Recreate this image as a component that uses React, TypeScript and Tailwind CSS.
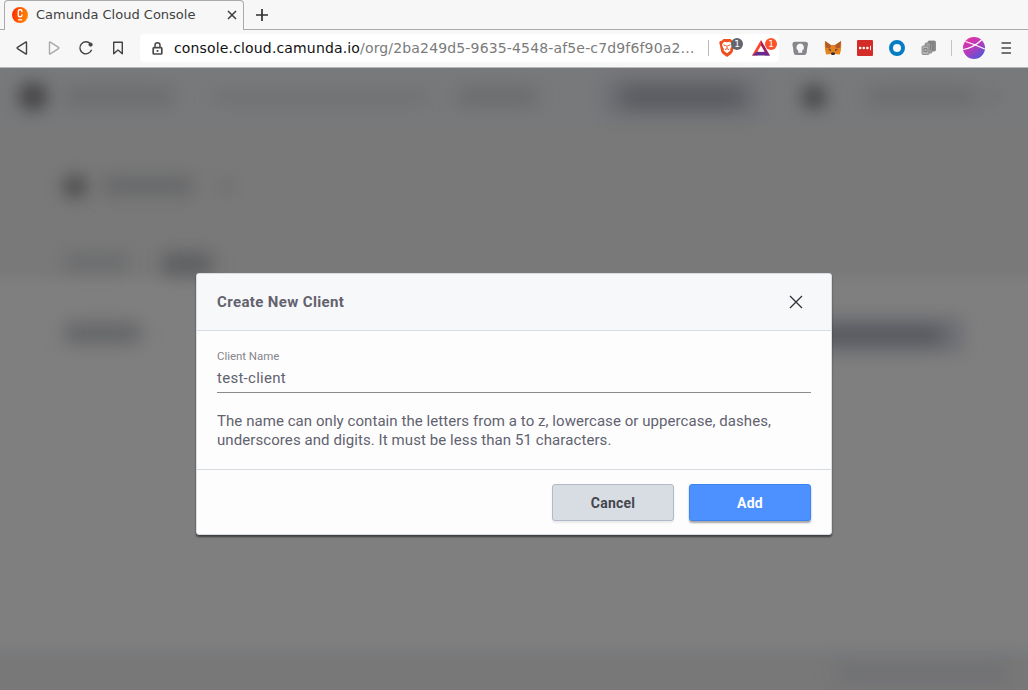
import React from "react";

function CamundaIcon() {
  return (
    <svg width="16" height="16" viewBox="0 0 16 16">
      <defs>
        <linearGradient id="cam" x1="0" x2="1" y1="0" y2="0.2">
          <stop offset="0" stopColor="#ff2500" />
          <stop offset="1" stopColor="#ff8500" />
        </linearGradient>
      </defs>
      <circle cx="8" cy="8" r="8" fill="url(#cam)" />
      <path d="M9.900 5.200V4.300q0-1.500-1.300-1.500H7.700Q6.300 2.800 6.300 4.300v4q0 1.500 1.400 1.500h.9q1.300 0 1.300-1.500V7.300" fill="none" stroke="#fff" strokeWidth="1.400" />
      <path d="M6 12.800h4.200" stroke="#fff" strokeWidth="1.200" />
    </svg>
  );
}

function TabStrip() {
  return (
    <div className="flex h-[30px] w-full shrink-0">
      <div className="w-1 border-b border-[#aaaaaa]" />
      <div className="flex w-60 items-center rounded-t-[4px] border border-b-0 border-[#aaaaaa] pb-px pl-[7px] pr-[6px]">
        <CamundaIcon />
        <span className="ml-2 whitespace-nowrap text-[13px] leading-4 text-[#3f3f3f]">Camunda Cloud Console</span>
        <svg className="ml-auto" width="11" height="10" viewBox="0 0 11 10">
          <path d="M2 1l8 8M10 1l-8 8" stroke="#3c3c3c" strokeWidth="1.500" />
        </svg>
      </div>
      <div className="flex flex-1 items-center border-b border-[#aaaaaa] pl-3">
        <svg width="12" height="12" viewBox="0 0 12 12">
          <path d="M6 0v12M0 6h12" stroke="#303030" strokeWidth="1.700" />
        </svg>
      </div>
    </div>
  );
}

function NavIcons() {
  return (
    <div className="flex w-[140px] shrink-0 items-center pl-[14px]">
      <svg width="120" height="18" viewBox="14 39 120 18" fill="none" stroke="#424242" strokeWidth="1.400" strokeLinejoin="round">
        <path d="M26.500 42.400v11.200q0 .7-.8.300l-8.200-5.300q-.8-.6 0-1.200l8.200-5.300q.8-.4.800.3z" />
        <path d="M49.500 42.400v11.200q0 .7.800.3l8.200-5.300q.8-.6 0-1.200l-8.200-5.300q-.8-.4-.8.300z" stroke="#aaaaaa" />
        <path d="M90.400 43.800A6 6 0 1 0 91.600 49.800" />
        <circle cx="90.600" cy="44.600" r="1.700" fill="#424242" strokeWidth="0.800" />
        <path d="M113.700 42.200h8.600v11.600L118 50l-4.300 3.800z" />
      </svg>
    </div>
  );
}

function LockIcon() {
  return (
    <svg className="ml-3 mr-[11px] shrink-0" width="11" height="13" viewBox="0 0 11 13">
      <path d="M3 6V3.300a2.500 2.500 0 0 1 5 0V6" fill="none" stroke="#484848" strokeWidth="1.500" />
      <rect x="1.200" y="5.700" width="8.600" height="6.300" rx="0.800" fill="none" stroke="#484848" strokeWidth="1.700" />
      <rect x="4.600" y="8" width="1.800" height="1.800" fill="#484848" />
    </svg>
  );
}

function Badge({ className }: { className: string }) {
  return (
    <span className={`absolute flex h-3 w-3 items-center justify-center rounded-full text-[9px] leading-3 text-white ${className}`}>1</span>
  );
}

function BraveIcon() {
  return (
    <svg width="16" height="18" viewBox="0 0 16 18">
      <path d="M4.500 0h7l1.700 1.700 1.900.2.7 2-.6 1.700-1.400 7.200-1.600 2.200L8 18l-4.200-3-1.600-2.200L.8 5.600.2 3.900l.7-2 1.900-.2z" fill="#f0501e" />
      <path d="M5 2.800l3 .5 3-.5 2 2.600-.7 2.600-1.200 2 .3 1.500L8 14.200l-3.400-2.700.3-1.500-1.200-2L3 5.400z" fill="#fff" />
      <path d="M4.500 5.800l2.300.9M11.500 5.800l-2.300.9M8 6v3.500M6 10.600l2-.9 2 .9" fill="none" stroke="#f0501e" strokeWidth="1" />
    </svg>
  );
}

function AddressBar() {
  return (
    <div className="flex h-7 w-[639px] shrink-0 items-center rounded-[4px] bg-white">
      <LockIcon />
      <span className="w-[522px] whitespace-nowrap text-[14px] leading-5 tracking-[0.155px] text-[#7b7b7b]">
        <span className="text-[#111]">console.cloud.camunda.io</span>/org/2ba249d5-9635-4548-af5e-c7d9f6f90a2…
      </span>
      <div className="ml-auto mr-[10px] h-4 w-px shrink-0 bg-[#b9b9b9]" />
      <div className="relative mr-[17px] h-[18px] w-4 shrink-0">
        <BraveIcon />
        <Badge className="-top-px left-[12px] bg-[#636570]" />
      </div>
      <div className="relative mr-[9px] h-4 w-[18px] shrink-0">
        <svg width="18" height="16" viewBox="0 0 18 16">
          <path d="M9 0L0 15.500h5.200L9 7z" fill="#ff4724" />
          <path d="M9 0l9 15.500h-5L9 7z" fill="#9e1f63" />
          <path d="M0 15.500L5 11.500h8l5 4z" fill="#662d91" />
          <path d="M9 5.500l3.600 6.300H5.400z" fill="#fff" />
        </svg>
        <Badge className="-top-[2px] left-[13px] bg-[#fb542b]" />
      </div>
    </div>
  );
}

function Extensions() {
  return (
    <div className="flex flex-1 items-center">
      <svg width="249" height="28" viewBox="779 34 249 28">
        <defs>
          <linearGradient id="ball" x1="0.150" y1="0" x2="0.850" y2="1">
            <stop offset="0" stopColor="#ed2fa0" />
            <stop offset="0.500" stopColor="#b23cbd" />
            <stop offset="1" stopColor="#405bdd" />
          </linearGradient>
        </defs>
        <path d="M795 41.800h10.400q2.600 0 2.600 2.600-1 3.500-1.300 8-.3 2.500-2.600 2.500h-8q-2.300 0-2.500-2.500-.3-4.500-1.200-8 0-2.600 2.600-2.600z" fill="#85878a" />
        <path d="M800.200 43.600a3.800 3.800 0 0 1 2 7v2.200h-4v-2.200a3.800 3.800 0 0 1 2-7z" fill="#f7f7f7" />
        <path d="M825 41l6 4h4l6-4 .2 5.500-.4 4-1 4-4.800-.4-1 1h-2l-1-1-4.800.4-1-4-.4-4z" fill="#e8821e" />
        <path d="M825 41l6 4.300-.9 3.200-4.300-.8zM841 41l-6 4.300.9 3.200 4.300-.8z" fill="#b25a28" />
        <path d="M828 49l3 .6-.4 1.800zM838 49l-3 .6.400 1.800z" fill="#35485c" />
        <path d="M831.500 52.500h3l.5 1.600-1 .8h-2l-1-.8z" fill="#2a2d36" />
        <rect x="857" y="40" width="16" height="16" rx="1" fill="#d42c28" />
        <circle cx="860.200" cy="48" r="1.300" fill="#fff" />
        <circle cx="863.800" cy="48" r="1.300" fill="#fff" />
        <circle cx="867.400" cy="48" r="1.300" fill="#fff" />
        <path d="M870.500 45.800v4.400" stroke="#fff" strokeWidth="0.900" />
        <circle cx="897" cy="48" r="6" fill="none" stroke="#047dc5" strokeWidth="4" />
        <g stroke="#818181" strokeWidth="0.800">
          <rect x="928" y="41" width="7.500" height="10" rx="1" fill="#8a8a8a" />
          <rect x="925" y="43" width="7" height="10" rx="1" fill="#a2a2a2" />
          <rect x="922" y="46" width="7" height="8.500" rx="1" fill="#b2b2b2" />
        </g>
        <path d="M930.500 41v9M933 41v9M924 48.500h3v3h-3z" stroke="#777" strokeWidth="0.800" fill="none" />
        <path d="M951.500 40v16" stroke="#c3c3c3" />
        <circle cx="974" cy="48" r="11" fill="url(#ball)" />
        <path d="M963.200 49.500Q973 48 981.500 40M965.500 41.500Q975 44.500 984.800 49" fill="none" stroke="#fff" strokeWidth="1.200" />
        <path d="M1001.500 43h9.500M1001.500 48h9.500M1001.500 53h9.500" stroke="#484848" strokeWidth="1.500" />
      </svg>
    </div>
  );
}

function BlurredPage() {
  return (
    <div className="flex h-full flex-col">
      <div className="h-[58px] bg-[#78797b]">
        <div className="flex h-full items-center pb-px">
          <div className="ml-[18px] h-[29px] w-[30px] rounded-full bg-[#484849] blur-[8px]" />
          <div className="ml-[18px] h-[17px] w-[107px] bg-[#6b6c6e] blur-[9px]" />
          <div className="ml-[40px] h-3 w-[215px] bg-[#707173] blur-[8px]" />
          <div className="ml-[30px] h-[17px] w-[80px] bg-[#6a6b6d] blur-[9px]" />
          <div className="ml-[67px] flex h-[36px] w-[153px] items-center justify-center bg-[#6c6d72] blur-[10px]">
            <div className="h-[22px] w-[120px] bg-[#58595e]" />
          </div>
          <div className="ml-[43px] h-[26px] w-[26px] rounded-full bg-[#4c4c4d] blur-[8px]" />
          <div className="ml-[41px] h-[17px] w-[108px] bg-[#6b6c6e] blur-[9px]" />
          <div className="ml-[12px] h-2 w-3 bg-[#707173] blur-[6px]" />
        </div>
      </div>
      <div className="h-[144px] bg-[#797979]">
        <div className="flex h-[120px] items-center pl-[62px]">
          <div className="h-[25px] w-[26px] rounded-full bg-[#535355] blur-[8px]" />
          <div className="ml-[15px] h-[18px] w-[90px] bg-[#666769] blur-[9px]" />
          <div className="ml-[29px] h-[16px] w-[10px] bg-[#6e6f71] blur-[7px]" />
        </div>
      </div>
      <div className="h-[16px] bg-linear-to-b from-[#797979] to-[#7f7f7f]">
        <div className="-mt-[22px] flex items-center pl-[65px]">
          <div className="h-4 w-[63px] bg-[#6a6b6d] blur-[9px]" />
          <div className="ml-[34px] mt-[5px] h-[22px] w-[50px] bg-[#5d5e61] blur-[9px]" />
        </div>
      </div>
      <div className="flex-1 bg-[#7f7f7f]">
        <div className="flex h-[94px] items-center pl-[65px] pr-[66px]">
          <div className="h-[20px] w-[75px] bg-[#636467] blur-[9px]" />
          <div className="ml-auto mt-1 flex h-[34px] w-[190px] items-center justify-center bg-[#6b6c72] blur-[9px]">
            <div className="h-5 w-[145px] bg-[#58595f]" />
          </div>
        </div>
      </div>
      <div className="h-[20px] bg-linear-to-b from-[#7f7f7f] to-[#78797b]" />
      <div className="flex h-[31px] items-center justify-end bg-[#787878] pb-1 pr-[20px]">
        <div className="h-4 w-[172px] bg-[#6f7073] blur-[9px]" />
      </div>
    </div>
  );
}

function ClientDialog() {
  return (
    <div className="flex h-[262px] w-[636px] flex-col overflow-hidden rounded-[3px] border border-[#d8dce3] bg-[#fdfdfe] font-[Roboto,sans-serif] text-[#62626e] shadow-[0_2px_2px_rgba(35,35,35,0.7)]">
      <div className="flex h-[57px] shrink-0 items-center justify-between border-b border-[#d8dce3] bg-[#f7f8fa] pl-5 pr-[28px]">
        <h2 className="text-[15px] font-bold leading-5 tracking-[0.370px]">Create New Client</h2>
        <svg width="14" height="14" viewBox="0 0 14 14">
          <path d="M1 1l12 12M13 1L1 13" stroke="#303036" strokeWidth="1.300" />
        </svg>
      </div>
      <div className="flex h-[139px] shrink-0 flex-col border-b border-[#d8dce3] px-5 pt-[18px]">
        <label className="text-[11.5px] leading-[14px] tracking-[-0.050px] text-[#86868b]">Client Name</label>
        <div className="mt-px flex h-[29px] items-center border-b border-[#8b8b8f] text-[15px] tracking-[0.270px]">test-client</div>
        <p className="mt-[19px] whitespace-nowrap text-[15px] leading-[19px] tracking-[0.060px]">
          The name can only contain the letters from a to z, lowercase or uppercase, dashes,
          <br />
          <span className="tracking-[0.080px]">underscores and digits. It must be less than 51 characters.</span>
        </p>
      </div>
      <div className="flex flex-1 items-center justify-end gap-[15px] pr-5 pb-px pt-px text-[14px] font-bold">
        <button className="h-[37px] w-[122px] rounded-[3px] border border-[#b0bac9] bg-[#d8dce3] pt-0.5 tracking-[0.220px] text-[#45464e] shadow-[0_2px_2px_rgba(0,0,0,0.080)]">Cancel</button>
        <button className="h-[37px] w-[122px] rounded-[3px] border border-[#3c85f0] bg-[#4d90ff] pt-0.5 tracking-[0.220px] text-[#fdfdfe] shadow-[0_2px_2px_rgba(0,0,0,0.350)]">Add</button>
      </div>
    </div>
  );
}

export default function App() {
  return (
    <div className="flex h-[690px] w-[1028px] flex-col overflow-hidden bg-[#f7f7f7] font-['DejaVu_Sans',sans-serif]">
      <TabStrip />
      <div className="flex h-[38px] shrink-0 items-center border-b border-[#b8b8b8] pb-px">
        <NavIcons />
        <AddressBar />
        <Extensions />
      </div>
      <div className="relative flex-1 overflow-hidden">
        <BlurredPage />
        <div className="absolute inset-0 flex items-start justify-center pt-[205px]">
          <ClientDialog />
        </div>
      </div>
    </div>
  );
}
